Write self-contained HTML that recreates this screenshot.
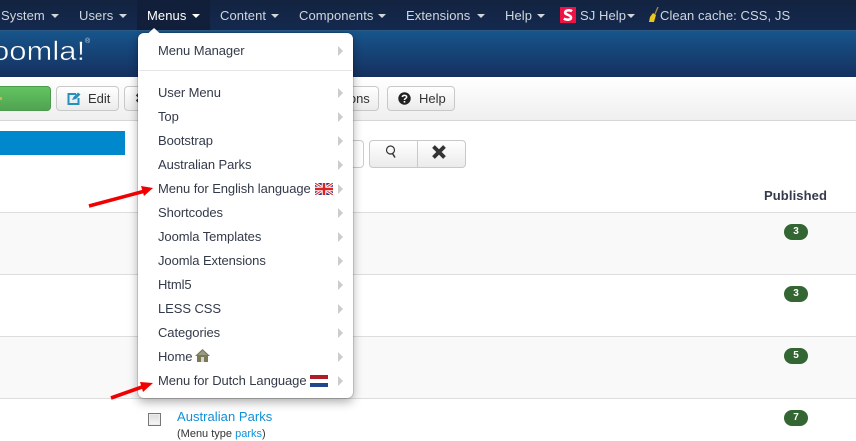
<!DOCTYPE html>
<html>
<head>
<meta charset="utf-8">
<style>
html,body{margin:0;padding:0}
body{width:856px;height:437px;overflow:hidden;position:relative;background:#fff;font-family:"Liberation Sans",sans-serif;font-size:13px;color:#333}
.a{position:absolute;white-space:nowrap}
#nav{left:0;top:0;width:856px;height:30px;background:linear-gradient(#132340,#14294f);border-bottom:1px solid #2c5a85}
.n{position:absolute;top:0;line-height:31px;color:#d0d6dc;white-space:nowrap;font-size:13px;letter-spacing:.08px}
.c{position:absolute;top:14px;width:0;height:0;border-left:4px solid transparent;border-right:4px solid transparent;border-top:4px solid #d0d6dc}
#hd{left:0;top:31px;width:856px;height:46px;background:linear-gradient(#17558b,#15305f)}
#tb{left:0;top:77px;width:856px;height:43px;background:linear-gradient(#fff,#efefef);border-bottom:1px solid #d6d6d6}
.b{position:absolute;box-sizing:border-box;height:25px;top:86px;border:1px solid #c9c9c9;border-radius:4px;background:linear-gradient(#fff,#ebebeb);line-height:23px;color:#333}
.row{position:absolute;left:0;width:856px;height:61px;border-top:1px solid #ddd}
.bd{position:absolute;left:784px;width:24px;height:16px;border-radius:8px;background:#336632;color:#fff;font-size:10px;font-weight:bold;text-align:center;line-height:16px}
#dd{left:138px;top:33px;width:215px;height:365px;background:#fff;border-radius:6px;box-shadow:0 0 0 1px rgba(0,0,0,.12),0 4px 10px rgba(0,0,0,.32)}
.i{position:absolute;left:20px;color:#333a4a;line-height:16px;white-space:nowrap;font-size:13px;letter-spacing:-.08px;transform:translateY(1px)}
.r{position:absolute;left:200px;width:0;height:0;border-top:5px solid transparent;border-bottom:5px solid transparent;border-left:5px solid #ccc;transform:translateY(1px)}
</style>
</head>
<body>
<div class="a" id="nav"></div>
<div class="a" style="left:137px;top:0;width:73px;height:30px;background:#111f3b"></div>
<span class="n" style="left:1px">System</span><i class="c" style="left:51px"></i>
<span class="n" style="left:79px">Users</span><i class="c" style="left:119px"></i>
<span class="n" style="left:147px;color:#fff">Menus</span><i class="c" style="left:192px;border-top-color:#fff"></i>
<span class="n" style="left:220px">Content</span><i class="c" style="left:271px"></i>
<span class="n" style="left:299px">Components</span><i class="c" style="left:378px"></i>
<span class="n" style="left:406px">Extensions</span><i class="c" style="left:477px"></i>
<span class="n" style="left:505px">Help</span><i class="c" style="left:537px"></i>
<svg class="a" style="left:560px;top:7px" width="16" height="16" viewBox="0 0 16 16"><rect width="16" height="16" fill="#ee1144"/><path d="M12 4.200C10.500 3 6 2.700 5.200 5.200 4.500 8 11 7.500 11 10.500 11 13.200 6 13.200 3.800 11.600" fill="none" stroke="#fff" stroke-width="2.600"/></svg>
<span class="n" style="left:580px">SJ Help</span><i class="c" style="left:627px"></i>
<svg class="a" style="left:647px;top:7px" width="14" height="16" viewBox="0 0 14 16"><path d="M11 0 8 7" stroke="#a98a4c" stroke-width="1.300"/><path d="M6 6 9 8 7 15 2 15 3 10Z" fill="#e8c81f"/></svg>
<span class="n" style="left:660px">Clean cache: CSS, JS</span>

<div class="a" id="hd"></div>
<span class="a" style="left:-8px;top:36px;font-size:27px;line-height:30px;color:#fff;-webkit-text-stroke:.5px #16467a;transform:scaleX(1.15);transform-origin:0 0">oomla!</span>
<span class="a" style="left:85px;top:38px;font-size:7px;line-height:7px;color:#cfd8e2">®</span>

<div class="a" id="tb"></div>
<div class="b" style="left:-5px;width:56px;background:linear-gradient(#62c462,#51a351);border-color:#4c9a4c"></div>
<div class="a" style="left:0;top:97px;width:2px;height:3px;background:#d9b13a"></div>
<div class="b" style="left:56px;width:63px"><span class="a" style="left:31px;top:0">Edit</span>
<svg class="a" style="left:10px;top:5px" width="14" height="13" viewBox="0 0 14 13"><path d="M9 2H1.500v10h10V6" fill="#e4f1f6" stroke="#2a8fb8" stroke-width="2"/><path d="M5 8l1.500-3L11 .5l2.500 2L9 7z" fill="#2a8fb8"/></svg></div>
<div class="b" style="left:124px;width:30px"><span class="a" style="left:10px;top:0;font-weight:bold;font-size:14px">✖</span></div>
<div class="b" style="left:300px;width:79px"><span class="a" style="left:24px;top:0">Options</span></div>
<div class="b" style="left:387px;width:68px"><span class="a" style="left:31px;top:0">Help</span>
<svg class="a" style="left:10px;top:5px" width="13" height="13" viewBox="0 0 13 13"><circle cx="6.500" cy="6.500" r="6.200" fill="#222"/><path d="M4.300 5C4.500 2.800 8.700 2.800 8.700 5 8.700 6.500 6.500 6.300 6.500 8" fill="none" stroke="#fff" stroke-width="1.500"/><rect x="5.700" y="9" width="1.600" height="1.600" fill="#fff"/></svg></div>

<div class="a" style="left:0;top:131px;width:125px;height:24px;background:#0088cc"></div>

<div class="b" style="left:300px;top:140px;width:64px;height:28px;background:#fff;border-color:#ccc"></div>
<div class="b" style="left:369px;top:140px;width:97px;height:28px"></div>
<div class="a" style="left:417px;top:141px;width:1px;height:26px;background:#c9c9c9"></div>
<svg class="a" style="left:385px;top:145px" width="12" height="14" viewBox="0 0 12 14"><circle cx="5.500" cy="5" r="4" fill="none" stroke="#333" stroke-width="1.200"/><path d="M7.500 8.500 10 12.500" stroke="#333" stroke-width="1.500"/></svg>
<svg class="a" style="left:431px;top:145px" width="16" height="14" viewBox="0 0 16 14"><path d="M2.500 1.500 13.500 12.500M13.500 1.500 2.500 12.500" stroke="#333" stroke-width="3.800"/></svg>

<span class="a" style="left:764px;top:188px;font-weight:bold;line-height:16px;color:#333a4a;letter-spacing:.1px">Published</span>

<div class="row" style="top:212px;background:#f9f9f9"></div>
<div class="row" style="top:274px;background:#fff"></div>
<div class="row" style="top:336px;background:#f9f9f9"></div>
<div class="row" style="top:398px;background:#fff;height:39px"></div>
<div class="bd" style="top:224px">3</div>
<div class="bd" style="top:286px">3</div>
<div class="bd" style="top:348px">5</div>
<div class="bd" style="top:410px">7</div>

<div class="a" style="left:148px;top:413px;box-sizing:border-box;width:13px;height:13px;border:1px solid #777;background:linear-gradient(#dcdcdc,#f8f8f8);box-shadow:inset 0 0 0 1px #eee"></div>
<span class="a" style="left:177px;top:409px;color:#1090d8;line-height:16px;letter-spacing:.04px">Australian Parks</span>
<span class="a" style="left:177px;top:427px;font-size:11px;line-height:14px;color:#333">(Menu type <span style="color:#1090d8">parks</span>)</span>

<div class="a" id="dd">
<span class="i" style="top:9px">Menu Manager</span><i class="r" style="top:12px"></i>
<div class="a" style="left:1px;top:37px;width:213px;height:1px;background:#e5e5e5"></div>
<span class="i" style="top:51px">User Menu</span><i class="r" style="top:54px"></i>
<span class="i" style="top:75px">Top</span><i class="r" style="top:78px"></i>
<span class="i" style="top:99px">Bootstrap</span><i class="r" style="top:102px"></i>
<span class="i" style="top:123px">Australian Parks</span><i class="r" style="top:126px"></i>
<span class="i" style="top:147px">Menu for English language</span><i class="r" style="top:150px"></i>
<svg class="a" style="left:177px;top:150px" width="18" height="12" viewBox="0 0 18 12"><rect width="18" height="12" fill="#2b3f87"/><path d="M0 0 18 12M18 0 0 12" stroke="#fff" stroke-width="3"/><path d="M0 0 18 12M18 0 0 12" stroke="#d22" stroke-width="1"/><path d="M9 0V12M0 6H18" stroke="#fff" stroke-width="4.500"/><path d="M9 0V12M0 6H18" stroke="#d22" stroke-width="2.500"/></svg>
<span class="i" style="top:171px">Shortcodes</span><i class="r" style="top:174px"></i>
<span class="i" style="top:195px">Joomla Templates</span><i class="r" style="top:198px"></i>
<span class="i" style="top:219px">Joomla Extensions</span><i class="r" style="top:222px"></i>
<span class="i" style="top:243px">Html5</span><i class="r" style="top:246px"></i>
<span class="i" style="top:267px">LESS CSS</span><i class="r" style="top:270px"></i>
<span class="i" style="top:291px">Categories</span><i class="r" style="top:294px"></i>
<span class="i" style="top:315px">Home</span><i class="r" style="top:318px"></i>
<svg class="a" style="left:57px;top:316px" width="15" height="14" viewBox="0 0 15 14"><path d="M7.500 0 15 7H13V13H2V7H0Z" fill="#7c7a55"/><path d="M6 13V8H9V13Z" fill="#cfd6dc"/><path d="M7.500 1.500 12 6H3Z" fill="#999b8a"/></svg>
<span class="i" style="top:339px">Menu for Dutch Language</span><i class="r" style="top:342px"></i>
<svg class="a" style="left:172px;top:342px" width="18" height="12" viewBox="0 0 18 12"><rect width="18" height="4" fill="#ae1c28"/><rect y="4" width="18" height="4" fill="#fff"/><rect y="8" width="18" height="4" fill="#21468b"/></svg>
</div>
<svg class="a" style="left:146px;top:24px" width="16" height="10" viewBox="0 0 16 10"><path d="M2 9.500 8 4 14 9.500Z" fill="#fff"/></svg>

<svg class="a" style="left:85px;top:180px" width="75" height="30" viewBox="0 0 75 30"><path d="M4 26 60 11" stroke="#f00000" stroke-width="3.600"/><path d="M68 8 56 6 59 16Z" fill="#f00000"/></svg>
<svg class="a" style="left:106px;top:376px" width="58" height="26" viewBox="0 0 58 26"><path d="M5 22 36 11" stroke="#f00000" stroke-width="3.600"/><path d="M47 7 34 6 37 16Z" fill="#f00000"/></svg>
</body>
</html>
